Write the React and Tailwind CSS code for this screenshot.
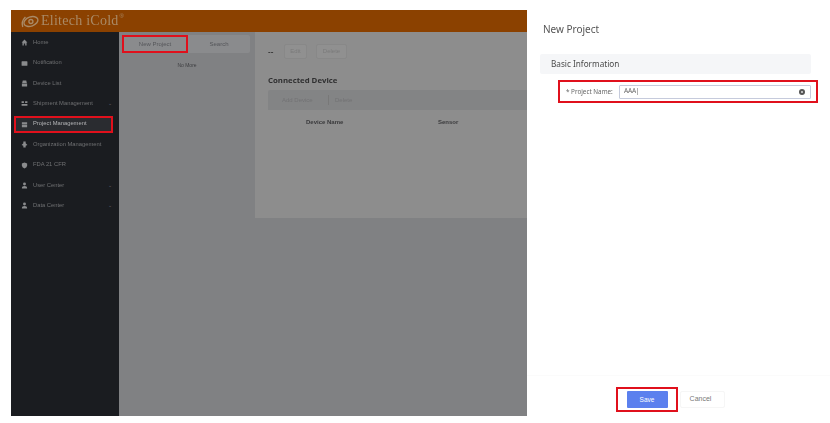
import React from "react";

const Ico = ({ d }) => (
  <svg viewBox="0 0 12 12" className="w-[7px] h-[7px] shrink-0" fill="#8a8b8d">
    <path d={d} />
  </svg>
);

const icons = {
  home: "M6 1 L11 6 H9.5 V11 H7.2 V7.5 H4.8 V11 H2.5 V6 H1 Z",
  bell: "M2 2 H10 Q11 2 11 3 V9 Q11 10 10 10 H2 Q1 10 1 9 V3 Q1 2 2 2 Z",
  device: "M3 1 H9 L10 5 H2 Z M1.5 6 H10.5 V11 H1.5 Z",
  ship: "M1 2 H5 V5 H1 Z M7 2 H11 V5 H7 Z M1 7 H11 V10 H1 Z",
  project: "M1.5 2 H10.5 V5 H1.5 Z M1.5 6 H10.5 V10.5 H1.5 Z",
  org: "M4 1 H8 V4 L11 7 L8 8 V11 H4 V8 L1 7 L4 4 Z",
  shield: "M6 1 L10.5 2.5 V6 Q10.5 9.5 6 11 Q1.5 9.5 1.5 6 V2.5 Z",
  user: "M6 1 A2.5 2.5 0 1 1 6 6 A2.5 2.5 0 1 1 6 1 Z M1.5 11 Q1.5 7 6 7 Q10.5 7 10.5 11 Z",
};

const items = [
  ["Home", icons.home],
  ["Notification", icons.bell],
  ["Device List", icons.device],
  ["Shipment Management", icons.ship, true],
  ["Project Management", icons.project, false, true],
  ["Organization Management", icons.org],
  ["FDA 21 CFR", icons.shield],
  ["User Center", icons.user, true],
  ["Data Center", icons.user, true],
];

export default function App() {
  return (
    <div className="relative w-[830px] h-[423px] bg-white flex overflow-hidden font-['Liberation_Sans',sans-serif]">
      <div className="w-[527px] shrink-0 pl-[11px] pt-[10px] pb-[7px] flex flex-col">
        <header className="h-[22px] shrink-0 bg-[#8b4100] flex items-center pl-[9px] gap-[1px] blur-[0.4px]">
          <svg viewBox="0 0 22 14" className="w-[20px] h-[13px]" fill="none" stroke="#a98a66" strokeWidth="1.5">
            <ellipse cx="12" cy="7" rx="8" ry="5" transform="rotate(-20 12 7)" />
            <circle cx="12" cy="7" r="2.2" />
            <path d="M6 2 Q1 7 3 13" />
          </svg>
          <span className="text-[14px] leading-none tracking-[0.25px] text-[#a98a66] font-['Liberation_Serif',serif]">
            Elitech iCold
          </span>
          <span className="text-[6px] leading-none self-start mt-[3px] text-[#a98a66]">®</span>
        </header>
        <div className="flex-1 flex min-h-0">
          <aside className="w-[108px] shrink-0 bg-[#1a1c20] flex flex-col pt-[0.5px] pl-[3px] pr-[6px]">
            {items.map(([label, d, caret, active]) => (
              <div
                key={label}
                className={
                  active
                    ? "h-[17px] my-[1.7px] flex items-center pl-[5px] pr-[1px] gap-[5px] border-2 border-[#e0101c] bg-[#2a2c30]"
                    : "h-[20.4px] flex items-center pl-[7px] pr-[0px] gap-[5px]"
                }
              >
                <span className="blur-[0.4px] flex"><Ico d={d} /></span>
                <span
                  className={
                    active
                      ? "flex-1 whitespace-nowrap text-[5.8px] leading-none text-[#b4b5b7] blur-[0.3px]"
                      : "flex-1 whitespace-nowrap text-[5.8px] leading-none text-[#6f7072] blur-[0.4px]"
                  }
                >
                  {label}
                </span>
                {caret && <span className="text-[5px] leading-none text-[#66676a] mr-[1px]">⌄</span>}
              </div>
            ))}
          </aside>
          <section className="w-[136px] shrink-0 bg-[#808183] pt-[3px] pl-[3px] pr-[5px] flex flex-col items-stretch">
            <div className="h-[18px] bg-[#8a8b8d] rounded-[2px] flex items-center text-[6px] text-[#55565a]">
              <div className="w-[66px] h-full flex items-center justify-center border-2 border-[#e0101c] blur-[0.3px]">New Project</div>
              <div className="flex-1 text-center blur-[0.4px]">Search</div>
            </div>
            <div className="mt-[10px] text-center text-[5px] leading-none text-[#3e3f42] blur-[0.3px] pl-[2px]">No More</div>
          </section>
          <main className="flex-1 min-w-0 bg-[#808183]">
            <div className="h-[186px] bg-[#8d8d8d] pl-[13px]">
              <div className="pt-[12px] flex items-center h-[27px] text-[6px] text-[#7a7a7a]">
                <span className="text-[#333] text-[8px] font-bold w-[16px] leading-none blur-[0.3px]">--</span>
                <span className="w-[23px] h-[15px] rounded-[2px] bg-[#909090] border border-[#888] flex items-center justify-center blur-[0.4px]">Edit</span>
                <span className="ml-[9px] w-[31px] h-[15px] rounded-[2px] bg-[#909090] border border-[#888] flex items-center justify-center blur-[0.4px]">Delete</span>
              </div>
              <h2 className="mt-[15px] text-[7.8px] leading-[12px] font-bold text-[#2f2f30] font-['Open_Sans',sans-serif] whitespace-nowrap blur-[0.2px]">
                Connected Device
              </h2>
              <div className="mt-[4px] h-[20px] bg-[#838485] flex items-center text-[6px] text-[#727274] rounded-tl-[2px]">
                <span className="ml-[14px] w-[46px] whitespace-nowrap blur-[0.4px]">Add Device</span>
                <span className="w-px h-[10px] bg-[#787878]" />
                <span className="ml-[6px] blur-[0.4px]">Delete</span>
              </div>
              <div className="mt-[8px] flex text-[6px] font-bold leading-[8px] text-[#3a3a3c] blur-[0.2px]">
                <span className="ml-[38px] w-[132px]">Device Name</span>
                <span>Sensor</span>
              </div>
            </div>
          </main>
        </div>
      </div>

      <div className="flex-1 min-w-0 bg-white flex flex-col font-['Noto_Sans',sans-serif]">
        <h1 className="mt-[21px] ml-[16px] text-[10px] leading-[16px] text-[#555] whitespace-nowrap blur-[0.2px]">New Project</h1>
        <div className="mt-[17px] ml-[13px] mr-[19px] h-[20px] bg-[#f5f6f8] rounded-[2px] flex items-center pl-[11px] text-[8.2px] text-[#4a4a4a]">
          <span className="blur-[0.2px]">Basic Information</span>
        </div>
        <div className="mt-[6px] ml-[31px] mr-[12px] h-[23px] border-2 border-[#e0101c] flex items-center pl-[6px] pr-[5px]">
          <span className="w-[53px] shrink-0 text-[6.3px] text-[#666] whitespace-nowrap blur-[0.2px]">* Project Name:</span>
          <div className="flex-1 h-[14px] border border-[#c6cbdc] rounded-[1px] flex items-center pl-[4px] pr-[5px]">
            <span className="flex-1 text-[6.5px] leading-none tracking-[-0.2px] text-[#666] blur-[0.2px]">AAA|</span>
            <svg viewBox="0 0 10 10" className="w-[6px] h-[6px]">
              <circle cx="5" cy="5" r="5" fill="#555" />
              <path d="M3.3 3.3 L6.7 6.7 M6.7 3.3 L3.3 6.7" stroke="#fff" strokeWidth="1" />
            </svg>
          </div>
        </div>
        <div className="mt-auto mb-[11px] border-t border-[#fbfbfb] pt-[11px] flex items-center pl-[89px]">
          <div className="w-[62px] h-[25px] border-2 border-[#e0101c] flex items-center justify-center">
            <button className="w-[41px] h-[17px] bg-[#5b80ee] rounded-[1px] text-[6.5px] text-white font-['Liberation_Sans',sans-serif]">Save</button>
          </div>
          <button className="ml-[2px] w-[45px] h-[17px] pr-[4px] border border-[#f6f6f6] rounded-[2px] text-[7px] text-[#777] font-['Liberation_Sans',sans-serif]">Cancel</button>
        </div>
      </div>
    </div>
  );
}
